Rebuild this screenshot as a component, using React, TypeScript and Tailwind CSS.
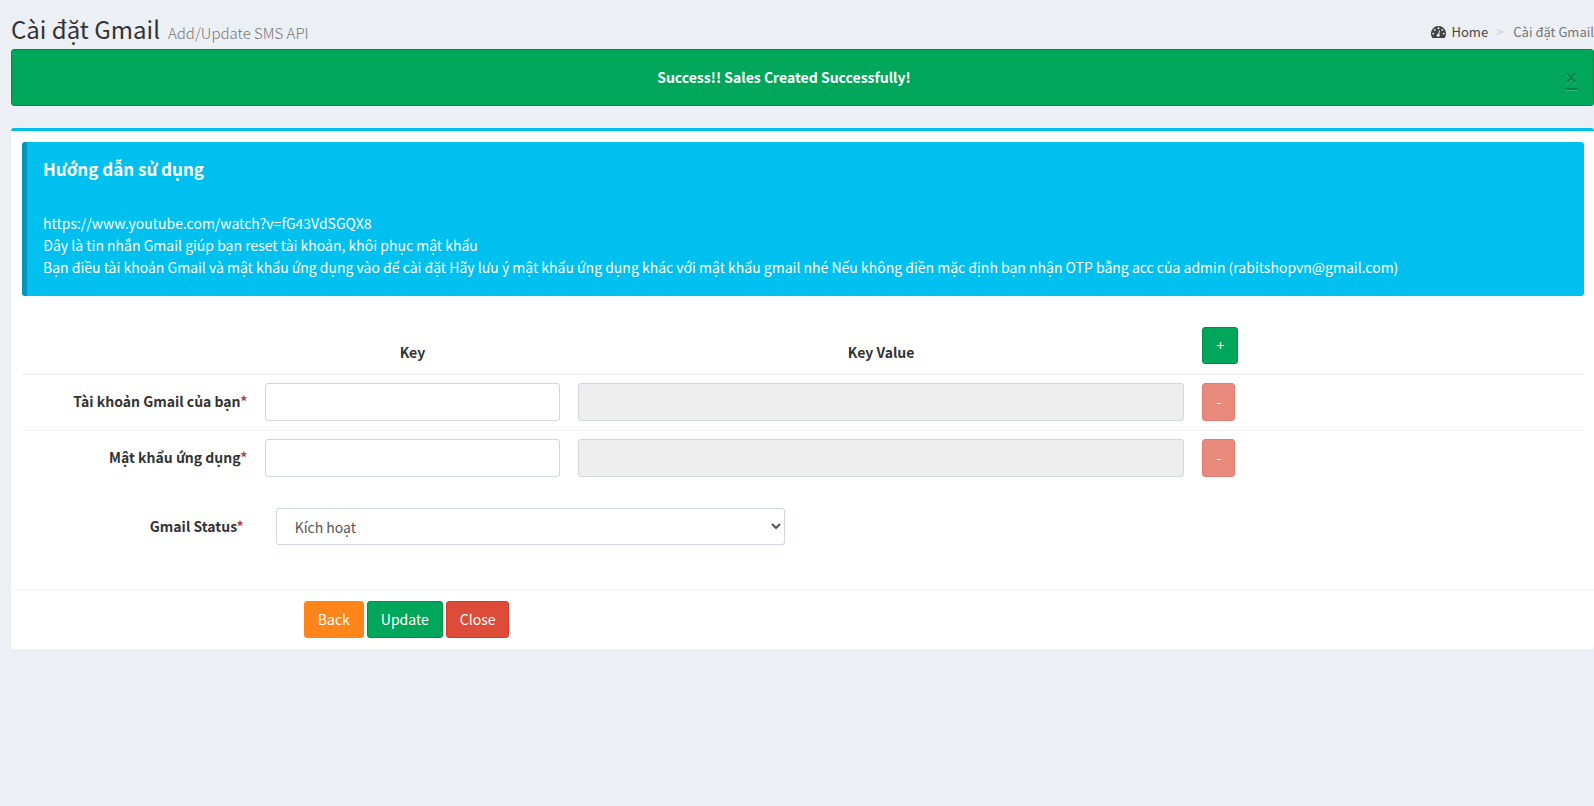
import { useState } from "react";

const fields = [
    { id: "gmail-account", label: "Tài khoản Gmail của bạn" },
    { id: "app-password", label: "Mật khẩu ứng dụng" },
];

const guide = [
    "https://www.youtube.com/watch?v=fG43VdSGQX8",
    "Đây là tin nhắn Gmail giúp bạn reset tài khoản, khôi phục mật khẩu",
    "Bạn điều tài khoản Gmail và mật khẩu ứng dụng vào để cài đặt Hãy lưu ý mật khẩu ứng dụng khác với mật khẩu gmail nhé Nếu không điền mặc định bạn nhận OTP bằng acc của admin (rabitshopvn@gmail.com)",
];

export default function App() {
    return <div className="min-h-screen bg-[#ecf0f5] pl-[11px] font-['Noto_Sans_CJK_SC','Noto_Sans',sans-serif] text-[14px] leading-[22px] text-[#333]">
        <PageHeader />
        <main>
            <SuccessAlert />
            <section className="mt-[22px] rounded-[3px] border-t-[3px] border-[#00c0ef] bg-white">
                <div className="pt-[11px] pr-[10px] pl-[11px]">
                    <Guide />
                    <KeyTable />
                </div>
                <StatusRow />
                <Footer />
            </section>
        </main>
    </div>;
}

function PageHeader() {
    return <header className="flex h-[49px] items-end justify-between">
        <h1 className="flex items-baseline text-[24px] leading-[32px]">
            Cài đặt Gmail
            <small className="ml-2 text-[15px] font-light text-[#777]">Add/Update SMS API</small>
        </h1>
        <nav aria-label="breadcrumb" className="mb-[6px] text-[13px]">
            <ol className="flex items-center">
                <li>
                    <a href="#" className="flex items-center text-[#444]">
                        <DashboardIcon />
                        Home
                    </a>
                </li>
                <li aria-hidden="true" className="pr-[10px] pl-2 text-[#ccc]">&gt;</li>
                <li className="text-[#777]">Cài đặt Gmail</li>
            </ol>
        </nav>
    </header>;
}

function DashboardIcon() {
    return <svg viewBox="0 0 28 22" aria-hidden="true" className="mr-[6px] h-3 w-[15px]">
        <path fill="#444" d="M14 0A14 14 0 0 0 2.2 21.500Q2.500 22 3 22H25Q25.500 22 25.800 21.500A14 14 0 0 0 14 0Z" />
        <g fill="#ecf0f5">
            <circle cx="4" cy="14" r="1.800" />
            <circle cx="7" cy="7" r="1.800" />
            <circle cx="14" cy="4" r="1.800" />
            <circle cx="21" cy="7" r="1.800" />
            <circle cx="24" cy="14" r="1.800" />
        </g>
        <path d="M14 17L15.800 9" stroke="#ecf0f5" strokeWidth="2" strokeLinecap="round" />
        <circle cx="13.500" cy="17" r="2.800" fill="#ecf0f5" />
    </svg>;
}

function SuccessAlert() {
    const [open, setOpen] = useState(true);
    if (!open) return null;

    return <div role="alert" className="flex h-[57px] items-center rounded-[3px] border border-[#008d4c] bg-[#00a65a] px-[15px] pb-0.5 text-white">
        <strong className="flex-1 pr-6 text-center font-bold">Success!! Sales Created Successfully!</strong>
        <button type="button" aria-label="close" onClick={() => setOpen(false)}
            className="font-['Noto_Sans',sans-serif] text-[23px] leading-[22px] font-bold text-black underline opacity-20 [text-shadow:0_1px_0_#fff]">×</button>
    </div>;
}

function Guide() {
    return <div className="mb-[22px] rounded-[3px] border-l-[5px] border-[#0097bc] bg-[#00c0ef] pt-4 pb-[18px] pl-4 text-white">
        <h4 className="text-[17px] font-bold">Hướng dẫn sử dụng</h4>
        <div className="pt-8">
            {guide.map(line => <p key={line}>{line}</p>)}
        </div>
    </div>;
}

function KeyTable() {
    return <table className="w-full table-fixed border-collapse">
        <thead>
            <tr className="border-b-2 border-[#f4f4f4]">
                <th className="w-[15%]"></th>
                <th className="w-1/5 px-[9px] pb-[10px] align-bottom font-bold">Key</th>
                <th className="w-2/5 px-[9px] pb-[10px] align-bottom font-bold">Key Value</th>
                <th className="w-1/4 px-[9px] py-[9px] text-left">
                    <button type="button" className="block h-[37px] w-9 rounded-[3px] border border-[#008d4c] bg-[#00a65a] pb-0.5 font-normal text-white">+</button>
                </th>
            </tr>
        </thead>
        <tbody>
            {fields.map(f => <tr key={f.id} className="border-b border-[#f4f4f4] last:border-b-0">
                <th scope="row" className="px-[9px] pb-[3px] text-right font-bold">
                    <label htmlFor={f.id}>{f.label}<span className="text-[#a94442]">*</span></label>
                </th>
                <td className="px-[9px] pt-2 pb-[9px]">
                    <input id={f.id} type="text" className="block h-[38px] w-full rounded-[3px] border border-[#d2d6de] bg-white px-3" />
                </td>
                <td className="px-[9px] pt-2 pb-[9px]">
                    <input type="text" disabled aria-label={`${f.label} value`}
                        className="block h-[38px] w-full rounded-[3px] border border-[#d2d6de] bg-[#eee] px-3" />
                </td>
                <td className="px-[9px] pt-2 pb-[9px]">
                    <button type="button" disabled className="block h-[38px] w-[33px] rounded-[3px] border border-[#d73925] bg-[#dd4b39] pb-0.5 text-white opacity-65">-</button>
                </td>
            </tr>)}
        </tbody>
    </table>;
}

function StatusRow() {
    return <div className="flex items-center pt-[22px] pb-11 pl-px">
        <label htmlFor="status" className="w-1/6 pr-8 pb-0.5 text-right font-bold">
            Gmail Status<span className="text-[#a94442]">*</span>
        </label>
        <div className="w-1/3 pr-[18px]">
            <select id="status" className="block h-[37px] w-full rounded-[3px] border border-[#d2d6de] bg-white pl-[14px] text-[#555]">
                <option>Kích hoạt</option>
                <option>Không kích hoạt</option>
            </select>
        </div>
    </div>;
}

function Footer() {
    return <div className="flex gap-[3px] border-t border-[#f4f4f4] py-[11px] pl-[18.5%]">
        <a href="#" className="flex h-[37px] items-center rounded-[3px] border border-[#ff851b] bg-[#ff851b] px-[13px] pb-0.5 text-white">Back</a>
        <button type="submit" className="h-[37px] rounded-[3px] border border-[#008d4c] bg-[#00a65a] px-[13px] pb-0.5 text-white">Update</button>
        <button type="button" className="h-[37px] rounded-[3px] border border-[#d73925] bg-[#dd4b39] px-[13px] pb-0.5 text-white">Close</button>
    </div>;
}
